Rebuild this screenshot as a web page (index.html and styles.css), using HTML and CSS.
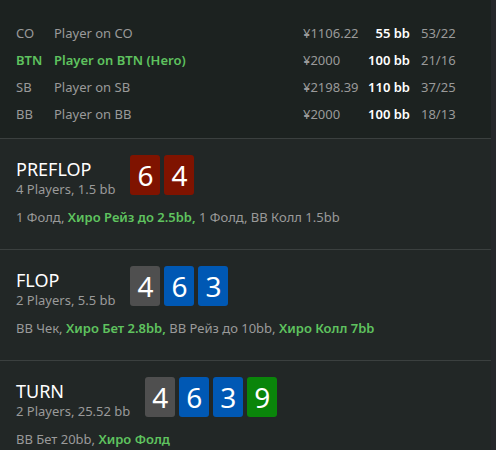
FILE: index.html
```html
<!DOCTYPE html>
<html lang="ru">
<head>
  <meta charset="UTF-8">
  <title>Hand history</title>
  <link rel="stylesheet" href="styles.css">
</head>
<body>
  <div class="page">
    <div class="players">
      <div class="player">
        <span class="pos">CO</span>
        <span class="name">Player on CO</span>
        <span class="stack">¥1106.22</span>
        <span class="bb">55 bb</span>
        <span class="ratio">53/22</span>
      </div>
      <div class="player hero">
        <span class="pos">BTN</span>
        <span class="name">Player on BTN (Hero)</span>
        <span class="stack">¥2000</span>
        <span class="bb">100 bb</span>
        <span class="ratio">21/16</span>
      </div>
      <div class="player">
        <span class="pos">SB</span>
        <span class="name">Player on SB</span>
        <span class="stack">¥2198.39</span>
        <span class="bb">110 bb</span>
        <span class="ratio">37/25</span>
      </div>
      <div class="player">
        <span class="pos">BB</span>
        <span class="name">Player on BB</span>
        <span class="stack">¥2000</span>
        <span class="bb">100 bb</span>
        <span class="ratio">18/13</span>
      </div>
    </div>

    <div class="street">
      <div class="street-head">
        <div class="street-title">
          <div class="street-name">PREFLOP</div>
          <div class="street-info">4 Players, 1.5 bb</div>
        </div>
        <div class="cards">
          <span class="card red">6</span>
          <span class="card red">4</span>
        </div>
      </div>
      <div class="actions">1 Фолд, <b>Хиро Рейз до 2.5bb,</b> 1 Фолд, BB Колл 1.5bb</div>
    </div>

    <div class="street">
      <div class="street-head">
        <div class="street-title">
          <div class="street-name">FLOP</div>
          <div class="street-info">2 Players, 5.5 bb</div>
        </div>
        <div class="cards">
          <span class="card grey">4</span>
          <span class="card blue">6</span>
          <span class="card blue">3</span>
        </div>
      </div>
      <div class="actions">BB Чек, <b>Хиро Бет 2.8bb,</b> BB Рейз до 10bb, <b>Хиро Колл 7bb</b></div>
    </div>

    <div class="street">
      <div class="street-head">
        <div class="street-title">
          <div class="street-name">TURN</div>
          <div class="street-info">2 Players, 25.52 bb</div>
        </div>
        <div class="cards">
          <span class="card grey">4</span>
          <span class="card blue">6</span>
          <span class="card blue">3</span>
          <span class="card green">9</span>
        </div>
      </div>
      <div class="actions">BB Бет 20bb, <b>Хиро Фолд</b></div>
    </div>
  </div>
</body>
</html>
```

FILE: styles.css
```css
body {
  margin: 0;
  background-color: #26282b;
  font-family: 'Noto Sans', 'Open Sans', sans-serif;
  font-size: 13px;
  color: #9a9a9a;
  height: 450px;
  overflow: hidden;
}
.page {
  width: 491px;
  background-color: #222726;
  min-height: 450px;
}
.players {
  background-color: #1c2220;
  padding: 19px 0 11px 16px;
  border-bottom: 1px solid #3b403f;
}
.player {
  display: flex;
  align-items: center;
  height: 27px;
  white-space: nowrap;
}
.pos {
  width: 38px;
}
.name {
  width: 249px;
}
.stack {
  width: 56px;
}
.bb {
  width: 51px;
  text-align: right;
  color: #ffffff;
  font-weight: 600;
}
.ratio {
  margin-left: 11px;
}
.player.hero .pos,
.player.hero .name {
  color: #5fc35f;
  font-weight: 600;
}
.street {
  padding: 16px 16px 0 16px;
  height: 94px;
  border-bottom: 1px solid #3b403f;
}
.street-head {
  display: flex;
  align-items: flex-start;
  gap: 15px;
}
.street-title {
  padding-top: 3px;
}
.street-name {
  color: #ffffff;
  font-size: 18px;
  line-height: 22px;
}
.street-info {
  line-height: 18px;
}
.cards {
  display: flex;
  gap: 4px;
}
.card {
  width: 30px;
  height: 40px;
  border-radius: 3px;
  color: #ffffff;
  font-size: 28px;
  line-height: 40px;
  text-align: center;
}
.card.red { background-color: #7f1300; }
.card.grey { background-color: #4f4f4f; }
.card.blue { background-color: #0058b4; }
.card.green { background-color: #0a850a; }
.actions {
  margin-top: 10px;
  line-height: 18px;
  white-space: nowrap;
}
.actions b {
  color: #5fc35f;
  font-weight: 600;
}
```
